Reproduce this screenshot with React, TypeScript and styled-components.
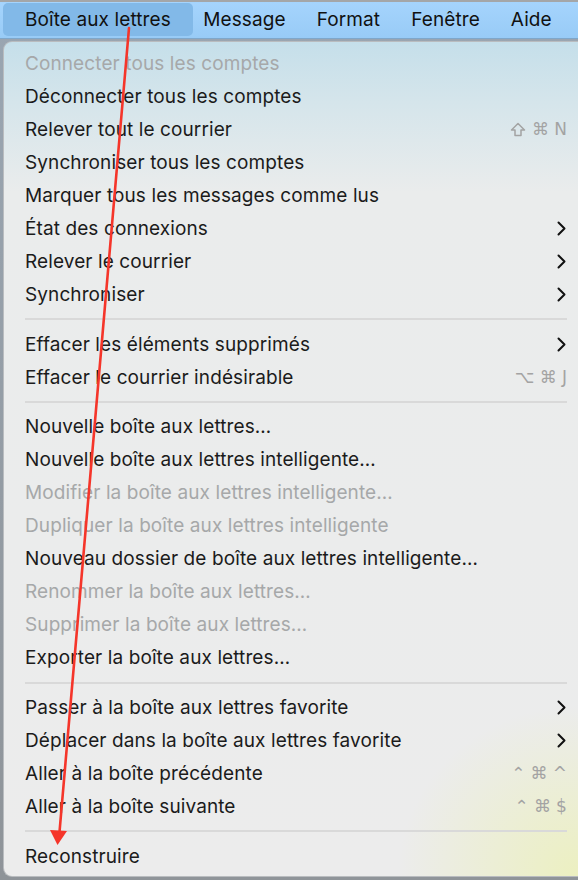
import React from "react";
import styled, { createGlobalStyle } from "styled-components";

const Global = createGlobalStyle`
  html, body { margin: 0; padding: 0; background: #8e9298; }
  body { font-family: Inter, "Noto Sans", "Liberation Sans", sans-serif; -webkit-font-smoothing: antialiased; }
`;

const Screen = styled.div`
  position: relative;
  width: 578px;
  height: 880px;
  overflow: hidden;
  background: linear-gradient(180deg, #9aa6b2 0%, #8f9499 100%);
  display: flex;
  flex-direction: column;
`;

const MenuBar = styled.div`
  height: 35px;
  border-top: 2px solid #a4a6a8;
  border-bottom: 1px solid #7fa7ca;
  background: linear-gradient(180deg, #a5d4fd 0%, #98cbf6 100%);
  display: flex;
  align-items: stretch;
  padding: 1px 0 0 3px;
  box-sizing: content-box;
`;

const BarTitle = styled.div<{ $active?: boolean }>`
  display: flex;
  align-items: center;
  height: 33px;
  padding: ${(p) => (p.$active ? "0 22px" : "0 15.5px")};
  margin-right: ${(p) => (p.$active ? "-5px" : "0")};
  border-radius: 5px;
  background: ${(p) => (p.$active ? "#82b9e8" : "transparent")};
  font-size: 19px;
  color: #111;
  letter-spacing: 0.1px;
  white-space: nowrap;
`;

const Body = styled.div`
  flex: 1;
  display: flex;
  padding: 2px 0 3px 3px;
  min-height: 0;
`;

const Panel = styled.div`
  flex: 1;
  border: 1px solid #b9bcbf;
  border-right: none;
  border-radius: 9px 0 0 9px;
  padding: 5px 11px 3px 21px;
  background:
    radial-gradient(ellipse 180px 170px at 100% 100%, rgba(236, 240, 190, 0.95), rgba(236, 240, 190, 0) 100%),
    linear-gradient(180deg, #c5dfea 0px, #d5e5eb 60px, #eaecec 150px, #ececec 100%);
  display: flex;
  flex-direction: column;
`;

const Row = styled.div<{ $disabled?: boolean }>`
  height: 33px;
  display: flex;
  align-items: center;
  justify-content: space-between;
  font-size: 19px;
  letter-spacing: 0.1px;
  color: ${(p) => (p.$disabled ? "#a6a8a9" : "#1b1b1b")};
  white-space: nowrap;
`;

const Separator = styled.div`
  height: 17px;
  display: flex;
  align-items: center;
  &::after {
    content: "";
    flex: 1;
    height: 2px;
    background: #d9d9d9;
  }
`;

const Shortcut = styled.span`
  display: flex;
  align-items: center;
  gap: 5px;
  color: #a3a3a3;
  font-size: 17px;
  font-family: "DejaVu Sans", Inter, sans-serif;
`;

const ShiftIcon = styled.svg`
  width: 16px;
  height: 15px;
  margin-right: 1px;
`;

const Chevron = styled.svg`
  width: 9px;
  height: 15px;
  margin-right: 1px;
`;

const Arrow = styled.svg`
  position: absolute;
  left: 0;
  top: 0;
  width: 578px;
  height: 880px;
  pointer-events: none;
`;

type Item =
  | { sep: true }
  | { label: string; disabled?: boolean; sub?: boolean; keys?: string[] };

const items: Item[] = [
  { label: "Connecter tous les comptes", disabled: true },
  { label: "Déconnecter tous les comptes" },
  { label: "Relever tout le courrier", keys: ["⇧", "⌘", "N"] },
  { label: "Synchroniser tous les comptes" },
  { label: "Marquer tous les messages comme lus" },
  { label: "État des connexions", sub: true },
  { label: "Relever le courrier", sub: true },
  { label: "Synchroniser", sub: true },
  { sep: true },
  { label: "Effacer les éléments supprimés", sub: true },
  { label: "Effacer le courrier indésirable", keys: ["⌥", "⌘", "J"] },
  { sep: true },
  { label: "Nouvelle boîte aux lettres…" },
  { label: "Nouvelle boîte aux lettres intelligente…" },
  { label: "Modifier la boîte aux lettres intelligente…", disabled: true },
  { label: "Dupliquer la boîte aux lettres intelligente", disabled: true },
  { label: "Nouveau dossier de boîte aux lettres intelligente…" },
  { label: "Renommer la boîte aux lettres…", disabled: true },
  { label: "Supprimer la boîte aux lettres…", disabled: true },
  { label: "Exporter la boîte aux lettres…" },
  { sep: true },
  { label: "Passer à la boîte aux lettres favorite", sub: true },
  { label: "Déplacer dans la boîte aux lettres favorite", sub: true },
  { label: "Aller à la boîte précédente", keys: ["⌃", "⌘", "^"] },
  { label: "Aller à la boîte suivante", keys: ["⌃", "⌘", "$"] },
  { sep: true },
  { label: "Reconstruire" },
];

const titles = ["Message", "Format", "Fenêtre", "Aide"];

function Key({ k }: { k: string }) {
  if (k === "⇧") {
    return (
      <ShiftIcon viewBox="0 0 16 15" aria-label="⇧">
        <path
          d="M8 1.5 L14.5 8 L11 8 L11 13.5 L5 13.5 L5 8 L1.5 8 Z"
          fill="none"
          stroke="#a3a3a3"
          strokeWidth="1.5"
          strokeLinejoin="round"
        />
      </ShiftIcon>
    );
  }
  return <span>{k}</span>;
}

export default function App() {
  return (
    <Screen>
      <Global />
      <MenuBar>
        <BarTitle $active>Boîte aux lettres</BarTitle>
        {titles.map((t) => (
          <BarTitle key={t}>{t}</BarTitle>
        ))}
      </MenuBar>
      <Body>
        <Panel>
          {items.map((it, i) =>
            "sep" in it ? (
              <Separator key={i} />
            ) : (
              <Row key={i} $disabled={it.disabled}>
                <span>{it.label}</span>
                {it.sub && (
                  <Chevron viewBox="0 0 9 15">
                    <path d="M1.5 1.5 L7.5 7.5 L1.5 13.5" fill="none" stroke="#111" strokeWidth="2" strokeLinecap="round" strokeLinejoin="round" />
                  </Chevron>
                )}
                {it.keys && (
                  <Shortcut>
                    {it.keys.map((k, j) => (
                      <Key key={j} k={k} />
                    ))}
                  </Shortcut>
                )}
              </Row>
            )
          )}
        </Panel>
      </Body>
      <Arrow viewBox="0 0 578 880">
        <line x1="129" y1="28" x2="59.5" y2="832" stroke="#f5352a" strokeWidth="2.6" strokeLinecap="round" />
        <polygon points="50,830 67,831 57.5,845" fill="#f5352a" />
      </Arrow>
    </Screen>
  );
}
